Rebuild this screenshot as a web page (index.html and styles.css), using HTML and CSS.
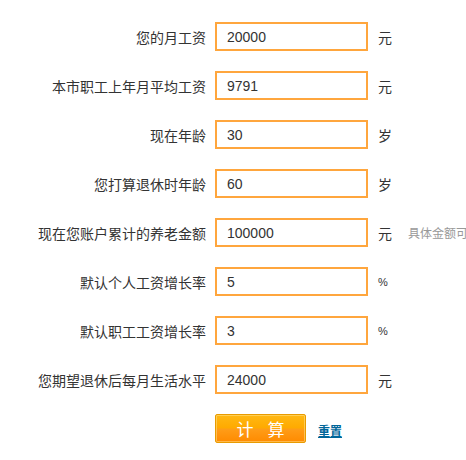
FILE: index.html
```html
<!DOCTYPE html>
<html>
<head>
  <meta charset="UTF-8">
  <title>养老金计算器</title>
  <link rel="stylesheet" href="styles.css">
</head>
<body>
  <form class="calc" id="calcForm">
    <div class="row">
      <label class="label" for="salary">您的月工资</label>
      <input class="field" type="text" id="salary" value="20000">
      <span class="unit">元</span>
    </div>
    <div class="row">
      <label class="label" for="avg">本市职工上年月平均工资</label>
      <input class="field" type="text" id="avg" value="9791">
      <span class="unit">元</span>
    </div>
    <div class="row">
      <label class="label" for="age">现在年龄</label>
      <input class="field" type="text" id="age" value="30">
      <span class="unit">岁</span>
    </div>
    <div class="row">
      <label class="label" for="retire">您打算退休时年龄</label>
      <input class="field" type="text" id="retire" value="60">
      <span class="unit">岁</span>
    </div>
    <div class="row">
      <label class="label" for="total">现在您账户累计的养老金额</label>
      <input class="field" type="text" id="total" value="100000">
      <span class="unit">元</span>
      <span class="hint">具体金额可</span>
    </div>
    <div class="row">
      <label class="label" for="rate1">默认个人工资增长率</label>
      <input class="field" type="text" id="rate1" value="5">
      <span class="unit small">%</span>
    </div>
    <div class="row">
      <label class="label" for="rate2">默认职工工资增长率</label>
      <input class="field" type="text" id="rate2" value="3">
      <span class="unit small">%</span>
    </div>
    <div class="row">
      <label class="label" for="level">您期望退休后每月生活水平</label>
      <input class="field" type="text" id="level" value="24000">
      <span class="unit">元</span>
    </div>
    <div class="actions">
      <button class="btn" type="submit">计 算</button>
      <a class="reset" href="#">重置</a>
    </div>
  </form>
</body>
</html>
```

FILE: styles.css
```css
/* Reset & basic styling */
* { box-sizing: border-box; }
html, body {
  margin: 0;
  padding: 0;
  overflow: hidden;
}
body {
  background: #fff;
  font-family: "Liberation Sans", Arial, "Noto Sans CJK SC", sans-serif;
  color: #333;
}
.calc {
  padding-top: 12px;
}
/* One line of the form: label, input, unit */
.row {
  display: flex;
  align-items: center;
  height: 49px;
  white-space: nowrap;
}
.label {
  width: 206px;
  flex: none;
  text-align: right;
  font-size: 14px;
  color: #333;
}
.field {
  flex: none;
  width: 153px;
  height: 29px;
  margin-left: 9px;
  padding: 0 10px;
  border: 2px solid #ffa63d;
  font-family: "Liberation Sans", Arial, sans-serif;
  font-size: 14px;
  color: #333;
  outline: none;
}
.unit {
  flex: none;
  width: 20px;
  margin-left: 10px;
  font-size: 14px;
  color: #333;
}
.unit.small {
  font-size: 11px;
}
.hint {
  margin-left: 10px;
  font-size: 12px;
  color: #999;
}
/* Buttons */
.actions {
  display: flex;
  align-items: center;
  margin-top: 10px;
  padding-left: 215px;
}
.btn {
  width: 91px;
  height: 29px;
  padding: 0 0 0 5px;
  border: 1px solid #e89b00;
  border-radius: 2px;
  background: linear-gradient(#ffb814, #ffaa00 48%, #ff9d18 52%, #ff8a00);
  box-shadow: inset 0 0 0 1px rgba(255, 230, 150, 0.5);
  color: #fff;
  font-family: "Noto Sans CJK SC", sans-serif;
  font-size: 17px;
  font-weight: normal;
  letter-spacing: 5px;
  cursor: pointer;
}
.reset {
  margin-left: 12px;
  margin-top: 4px;
  font-size: 12px;
  font-weight: bold;
  color: #00669a;
  text-decoration: underline;
}
```
